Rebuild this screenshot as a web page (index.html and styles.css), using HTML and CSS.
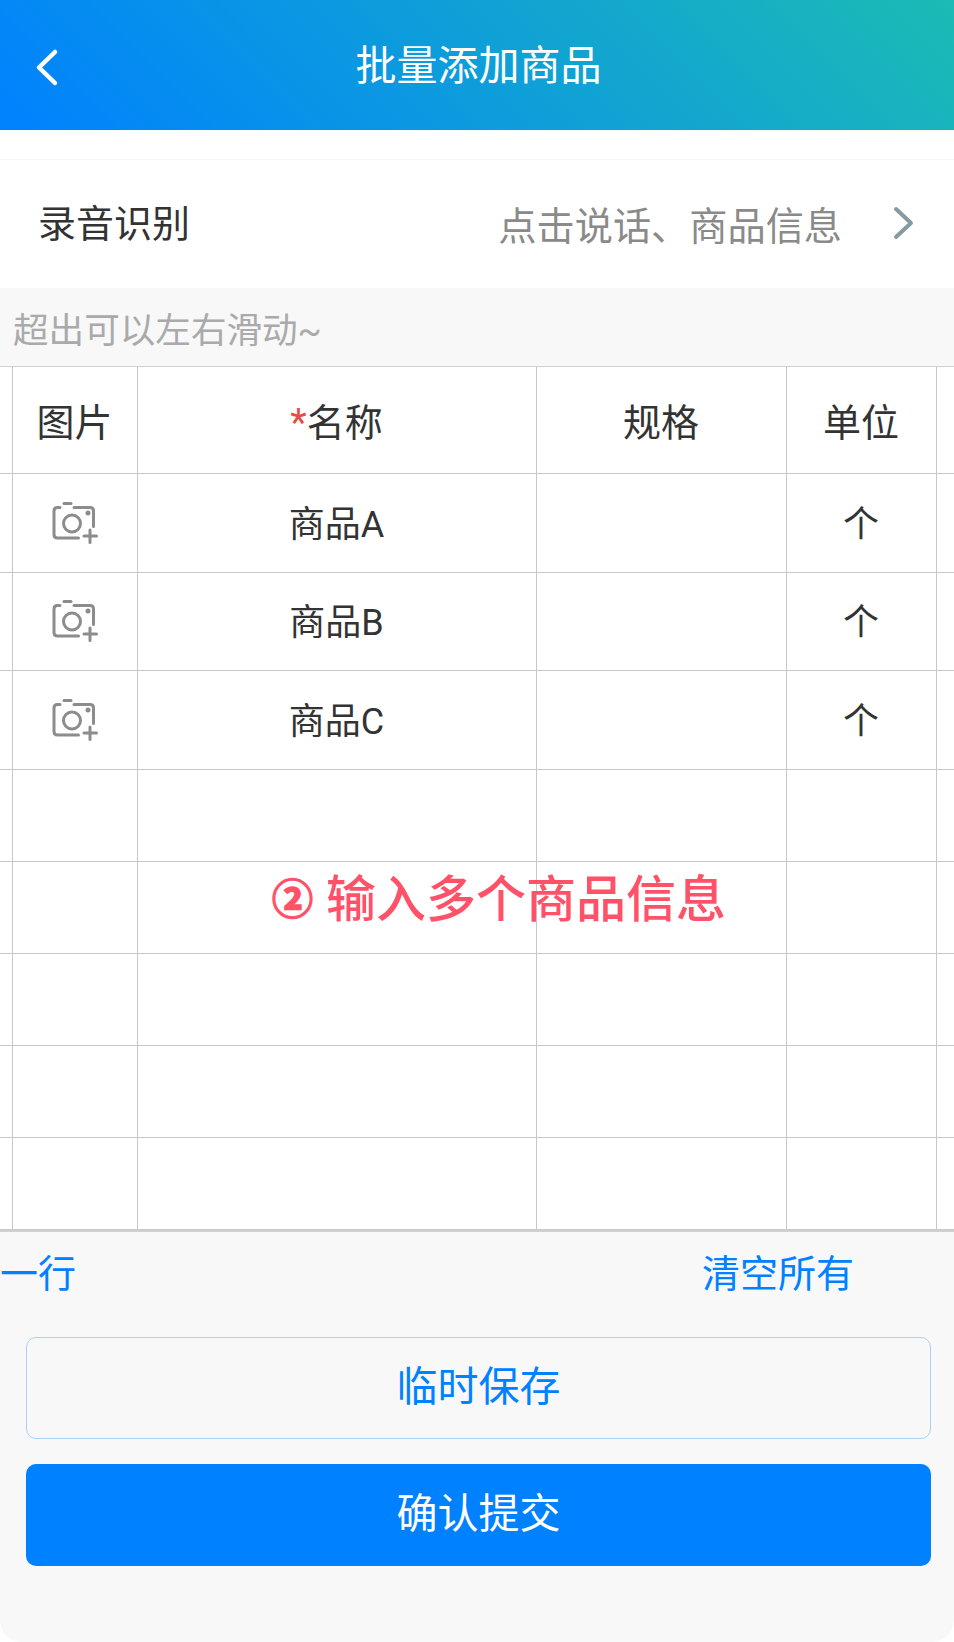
FILE: index.html
```html
<!DOCTYPE html>
<html lang="zh-CN">
<head>
<meta charset="utf-8">
<title>批量添加商品</title>
<link rel="stylesheet" href="styles.css">
</head>
<body>
<div class="screen">
  <header class="navbar">
    <svg class="back" viewBox="0 0 24 40" aria-hidden="true"><path d="M20 4 4 19.500 20 35"/></svg>
    <h1 class="nav-title">批量添加商品</h1>
  </header>
  <div class="spacer"></div>
  <div class="voice-row">
    <span class="voice-label">录音识别</span>
    <span class="voice-hint">点击说话、商品信息</span>
    <svg class="chevron" viewBox="0 0 24 38" aria-hidden="true"><path d="M4 5 19 19 4 33"/></svg>
  </div>
  <p class="scroll-tip">超出可以左右滑动~</p>
  <div class="table-wrap">
    <table class="goods">
      <colgroup><col class="c0"><col class="c1"><col class="c2"><col class="c3"><col class="c4"><col></colgroup>
      <thead>
        <tr class="head"><th></th><th>图片</th><th><span class="req">*</span>名称</th><th>规格</th><th>单位</th><th></th></tr>
      </thead>
      <tbody>
        <tr class="item"><td></td><td><svg class="cam" viewBox="0 0 48 42"><use href="#camera"/></svg></td><td>商品A</td><td></td><td>个</td><td></td></tr>
        <tr class="item item-short"><td></td><td><svg class="cam" viewBox="0 0 48 42"><use href="#camera"/></svg></td><td>商品B</td><td></td><td>个</td><td></td></tr>
        <tr class="item"><td></td><td><svg class="cam" viewBox="0 0 48 42"><use href="#camera"/></svg></td><td>商品C</td><td></td><td>个</td><td></td></tr>
        <tr class="blank"><td></td><td></td><td></td><td></td><td></td><td></td></tr>
        <tr class="blank"><td></td><td></td><td></td><td></td><td></td><td></td></tr>
        <tr class="blank"><td></td><td></td><td></td><td></td><td></td><td></td></tr>
        <tr class="blank"><td></td><td></td><td></td><td></td><td></td><td></td></tr>
        <tr class="blank"><td></td><td></td><td></td><td></td><td></td><td></td></tr>
      </tbody>
    </table>
    <div class="annotation"><span class="circled">②</span>输入多个商品信息</div>
  </div>
  <footer class="footer">
    <div class="actions">
      <span class="add-row">一行</span>
      <span class="clear-all">清空所有</span>
    </div>
    <button class="btn btn-outline">临时保存</button>
    <button class="btn btn-solid">确认提交</button>
  </footer>
</div>
<svg class="defs" aria-hidden="true">
  <symbol id="camera" viewBox="1 0 48 42">
    <g fill="none" stroke="#8c8c8c" stroke-width="3" stroke-linecap="round" stroke-linejoin="round">
      <path d="M10 5.500H7.500Q4 5.500 4 9V32.500Q4 36 7.500 36H28.500"/>
      <path d="M14 1.500H21"/>
      <path d="M24 5.500H40Q43.500 5.500 43.500 9V24.500"/>
      <circle cx="22" cy="21.500" r="8.500"/>
      <path d="M40 28V40.500M34 34H46.500"/>
    </g>
    <circle cx="38" cy="11" r="2.500" fill="#8c8c8c"/>
  </symbol>
</svg>
</body>
</html>
```
FILE: styles.css
```css
* { box-sizing: border-box; }
html, body { margin: 0; padding: 0; background: #fff; }
body { font-family: Roboto, "Noto Sans CJK SC", sans-serif; color: #333; }
.screen { width: 954px; height: 1642px; display: flex; flex-direction: column; overflow: hidden; background: #fff; }
.navbar { height: 130px; flex: none; display: flex; align-items: center; justify-content: center; position: relative; background: linear-gradient(45deg, #0081ff, #1cbbb4); color: #fff; padding-left: 3px; }
.back { position: absolute; left: 35px; top: 48px; width: 24px; height: 40px; }
.back path { fill: none; stroke: #fff; stroke-width: 4.500; stroke-linecap: round; stroke-linejoin: round; }
.nav-title { margin: 4px 0 0; font-size: 41px; font-weight: 400; line-height: 1.2; }
.spacer { height: 30px; flex: none; border-bottom: 1px solid #f5f5f5; }
.voice-row { height: 128px; flex: none; display: flex; align-items: center; padding: 0 38px 0 38px; }
.voice-label { font-size: 38px; color: #333; margin-top: -8px; }
.voice-hint { margin-left: auto; font-size: 38.200px; color: #8a8a8a; margin-top: -2px; }
.chevron { width: 24px; height: 38px; margin-left: 50px; margin-top: -2px; }
.chevron path { fill: none; stroke: #8799a3; stroke-width: 4; stroke-linecap: round; stroke-linejoin: round; }
.scroll-tip { margin: 0; height: 78px; flex: none; padding: 8px 0 0 13px; background: #f8f8f8; font-size: 35.600px; line-height: 70px; color: #aaa; }
.table-wrap { position: relative; flex: none; height: 864px; overflow: hidden; }
.goods { border-collapse: collapse; table-layout: fixed; width: 954px; border-top: 2px solid #d0d0d0; margin-top: -1px; }
.c0 { width: 12px; }
.c1 { width: 125px; }
.c2 { width: 399px; }
.c3 { width: 250px; }
.c4 { width: 150px; }
.goods th, .goods td { border-left: 1px solid #c8c8c8; border-bottom: 1px solid #c8c8c8; padding: 0; text-align: center; font-weight: 400; vertical-align: middle; }
.goods th:first-child, .goods td:first-child { border-left: 0; }
.head th { height: 107px; font-size: 38px; color: #333; }
.item td { height: 99px; padding-bottom: 4px; font-size: 36px; color: #333; }
.item-short td { height: 98px; }
.blank td { height: 92px; }
.req { color: #e54d42; }
.cam { display: block; width: 48px; height: 42px; margin: 4px auto 0; }
.annotation { position: absolute; left: 272px; top: 504px; font-size: 50px; font-weight: 500; line-height: 1.2; color: #ff5268; white-space: nowrap; }
.circled { font-size: 41px; font-weight: 700; margin-right: 13px; vertical-align: 3px; -webkit-text-stroke: 1.500px #ff5268; }
.footer { flex: 1; display: flex; flex-direction: column; padding: 0 23px 0 26px; background: #f8f8f8; border-top: 2px solid #d0d0d0; border-radius: 0 0 22px 22px; }
.actions { height: 105px; flex: none; position: relative; display: flex; align-items: center; justify-content: flex-end; font-size: 38px; color: #0081ff; padding: 0 77px 28px 0; }
.add-row { position: absolute; left: -26px; }
.btn { display: block; width: 100%; height: 102px; flex: none; border-radius: 10px; font: inherit; font-size: 41px; padding: 0 0 10px; }
.btn-outline { background: transparent; border: 1px solid #a8d2f7; color: #0081ff; }
.btn-solid { margin-top: 25px; background: #0081ff; border: 0; color: #fff; }
.defs { position: absolute; width: 0; height: 0; }
```
